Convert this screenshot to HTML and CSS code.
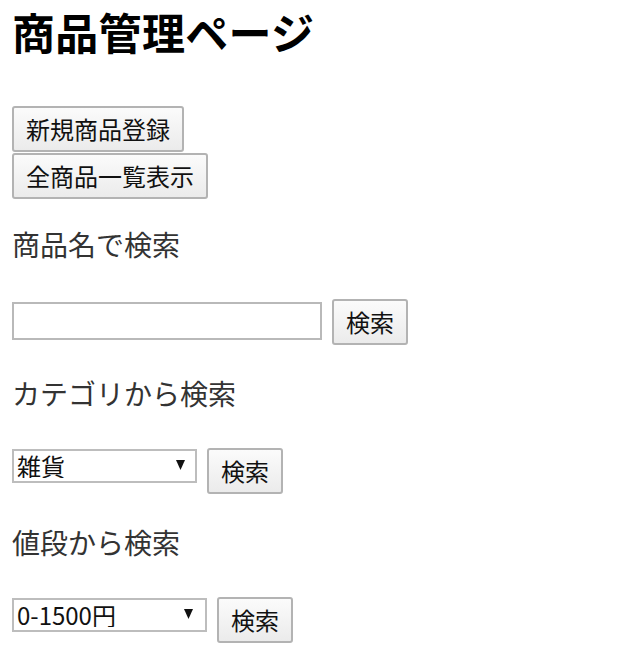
FILE: index.html
```html
<!DOCTYPE html>
<html lang="ja">
<head>
<meta charset="utf-8">
<title>商品管理ページ</title>
<link rel="stylesheet" href="styles.css">
</head>
<body>
<h1 class="title">商品管理ページ</h1>
<div class="actions">
  <button class="btn" type="button">新規商品登録</button>
  <button class="btn" type="button">全商品一覧表示</button>
</div>

<section class="search">
  <h3 class="search-title">商品名で検索</h3>
  <form class="search-row">
    <input class="text-field" type="text">
    <button class="btn" type="button">検索</button>
  </form>
</section>

<section class="search">
  <h3 class="search-title">カテゴリから検索</h3>
  <form class="search-row">
    <span class="select-wrap">
      <select class="select select-cat">
        <option>雑貨</option>
        <option>食品</option>
        <option>衣類</option>
      </select>
      <svg class="select-arrow" width="9" height="10" viewBox="0 0 9 10"><path d="M0 0H9L4.5 10Z" fill="#111"/></svg>
    </span>
    <button class="btn" type="button">検索</button>
  </form>
</section>

<section class="search">
  <h3 class="search-title">値段から検索</h3>
  <form class="search-row">
    <span class="select-wrap">
      <select class="select select-price">
        <option>0-1500円</option>
        <option>1500-3000円</option>
      </select>
      <svg class="select-arrow select-arrow-price" width="9" height="10" viewBox="0 0 9 10"><path d="M0 0H9L4.5 10Z" fill="#111"/></svg>
    </span>
    <button class="btn" type="button">検索</button>
  </form>
</section>
</body>
</html>
```

FILE: styles.css
```css
html, body {
  background: #ffffff;
}

body {
  margin: 0;
  padding: 10px 12px 0;
  font-family: "Noto Sans CJK JP", "Noto Sans", sans-serif;
  color: #000;
}

.title {
  margin: 0 0 53px;
  font-size: 43px;
  line-height: 43px;
  font-weight: 700;
  color: #000;
  letter-spacing: 0.3px;
}

.actions {
  display: flex;
  flex-direction: column;
  align-items: flex-start;
  gap: 1px;
}

.btn {
  margin: 0;
  font-family: "Noto Sans CJK JP", sans-serif;
  font-size: 24px;
  line-height: 24px;
  padding: 9px 12px;
  color: #111;
  border: 2px solid #b3b3b3;
  border-radius: 3px;
  background: linear-gradient(#fbfbfb, #ebebeb);
  box-sizing: border-box;
  height: 46px;
}

.search {
  margin-top: 34px;
}

.actions + .search {
  margin-top: 31px;
}

.search-title {
  margin: 0 0 41px;
  font-size: 28px;
  line-height: 28px;
  font-weight: 400;
  color: #333333;
}

.search-row {
  display: flex;
  align-items: flex-start;
  gap: 10px;
  margin: 0;
}

.text-field {
  margin: 3px 0 0;
  width: 310px;
  height: 38px;
  box-sizing: border-box;
  border: 2px solid #b9b9b9;
  padding: 2px 4px;
  font-size: 22px;
  font-family: "Noto Sans CJK JP", sans-serif;
  background: #fff;
}

.select-wrap {
  position: relative;
  display: block;
  margin-top: 1px;
}

.select {
  display: block;
  margin: 0;
  height: 34px;
  box-sizing: border-box;
  -webkit-appearance: none;
  appearance: none;
  border: 2px solid #bdbdbd;
  border-radius: 0;
  background: #fff;
  padding: 3px 20px 3px 3px;
  font-family: "Noto Sans CJK JP", sans-serif;
  font-size: 24px;
  line-height: 24px;
  color: #111;
}

.select-cat {
  width: 185px;
}

.select-price {
  width: 195px;
}

.select-arrow {
  position: absolute;
  right: 12px;
  top: 11px;
  pointer-events: none;
}

.select-arrow-price {
  right: 14px;
}
```
